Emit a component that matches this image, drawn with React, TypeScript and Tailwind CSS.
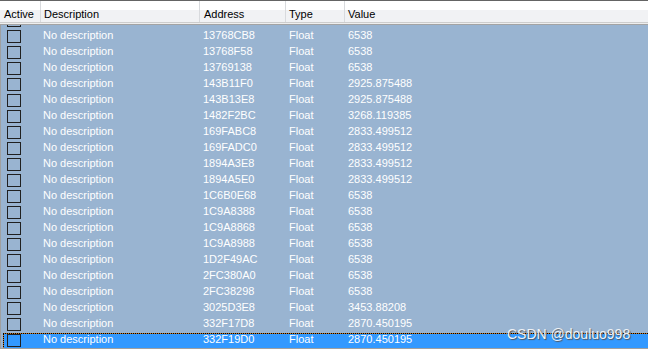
const rows = [
  ['13768CB8', '6538'],
  ['13768F58', '6538'],
  ['13769138', '6538'],
  ['143B11F0', '2925.875488'],
  ['143B13E8', '2925.875488'],
  ['1482F2BC', '3268.119385'],
  ['169FABC8', '2833.499512'],
  ['169FADC0', '2833.499512'],
  ['1894A3E8', '2833.499512'],
  ['1894A5E0', '2833.499512'],
  ['1C6B0E68', '6538'],
  ['1C9A8388', '6538'],
  ['1C9A8868', '6538'],
  ['1C9A8988', '6538'],
  ['1D2F49AC', '6538'],
  ['2FC380A0', '6538'],
  ['2FC38298', '6538'],
  ['3025D3E8', '3453.88208'],
  ['332F17D8', '2870.450195'],
  ['332F19D0', '2870.450195'],
];

const font = { fontFamily: '"Liberation Sans", Arial, sans-serif' };

const Row = ({ address, value, selected, hidden }: { address?: string; value?: string; selected?: boolean; hidden?: boolean }) => (
  <div className={`ml-[2px] ${selected ? 'bg-[#c9761f]' : ''}`}>
    <div
      className={`flex h-[16px] border border-r-0 ${
        selected ? 'border-dotted border-black bg-[#3399ff] bg-clip-padding' : 'border-transparent'
      }`}
    >
      <div className="w-[37px] shrink-0 pl-[3px]">
        <div className="w-[14px] h-[13px] border border-[#202020]" />
      </div>
      {!hidden && (
        <>
          <div className="w-[159px] shrink-0 pl-[2px] leading-[11px]">No description</div>
          <div className="w-[86px] shrink-0 pl-[3px] leading-[11px]">{address}</div>
          <div className="w-[59px] shrink-0 pl-[3px] leading-[11px]">Float</div>
          <div className="flex-1 pl-[3px] leading-[11px]">{value}</div>
        </>
      )}
    </div>
  </div>
);

const App = () => {
  return (
    <div className="relative w-[648px] h-[350px] overflow-hidden bg-white text-[11px]" style={font}>
      {/* header */}
      <div className="border-t border-[#646464]">
        <div className="flex h-[21px] text-black bg-[linear-gradient(to_bottom,#ffffff_0,#ffffff_9px,#f1f2f4_9px,#f1f2f4_100%)]">
          <div className="w-[41px] shrink-0 border-r border-[#d8dadd] pl-[4px] pt-[8px] leading-[11px]">Active</div>
          <div className="w-[159px] shrink-0 border-r border-[#d8dadd] pl-[3px] pt-[8px] leading-[11px]">Description</div>
          <div className="w-[86px] shrink-0 border-r border-[#d8dadd] pl-[4px] pt-[8px] leading-[11px]">Address</div>
          <div className="w-[59px] shrink-0 border-r border-[#d8dadd] pl-[3px] pt-[8px] leading-[11px]">Type</div>
          <div className="flex-1 pl-[3px] pt-[8px] leading-[11px]">Value</div>
        </div>
        <div className="h-[1px] bg-[#cdcdcd]" />
        <div className="h-[1px] bg-[#eeeeee]" />
        <div className="h-[1px] bg-[#a3a3a3]" />
      </div>

      {/* list body */}
      <div className="h-[323px] overflow-hidden bg-[#99b4d1] border-l border-[#a0a0a0] text-white">
        <div className="-mt-[12px]">
          <Row hidden />
          {rows.map(([address, value], i) => (
            <Row key={address} address={address} value={value} selected={i === rows.length - 1} />
          ))}
        </div>
      </div>
      <div className="h-[1px] bg-[#a0a0a0]" />

      <div className="absolute top-[326px] left-[507px] text-[14px] leading-[16px] text-[#eef2f7] [text-shadow:1px_1px_1px_#555]">
        CSDN @douluo998
      </div>
    </div>
  );
};

export default App;
